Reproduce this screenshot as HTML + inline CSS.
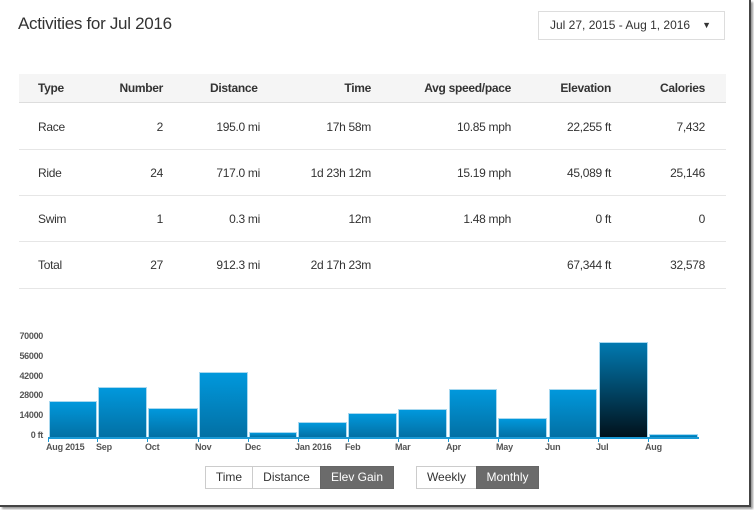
<!DOCTYPE html>
<html><head><meta charset="utf-8"><style>
*{margin:0;padding:0;box-sizing:border-box}
body{width:754px;height:510px;background:#fff;font-family:"Liberation Sans",sans-serif;position:relative;overflow:hidden;color:#333}
.a{position:absolute;white-space:nowrap}
.r{text-align:right}
.frame{position:absolute;left:0;top:0;width:751px;height:507px;border-right:2px solid #444;border-bottom:2px solid #444;box-shadow:2px 2px 2px #999}
.cell{font-size:12px;letter-spacing:-0.3px}
.hd{font-weight:bold;font-size:12px;letter-spacing:-0.3px;color:#333}
.line{position:absolute;left:19px;width:707px;height:1px;background:#e6e6e6}
.bar{position:absolute;background:linear-gradient(#0198dc,#0270a4);border:1px solid #a8d8ef;border-bottom:none}
.yl{position:absolute;left:0;width:43px;text-align:right;font-size:9px;font-weight:bold;color:#555;letter-spacing:-0.3px}
.xl{position:absolute;top:442px;font-size:9px;font-weight:bold;color:#555;letter-spacing:-0.2px}
.tk{position:absolute;top:437px;width:1px;height:5px;background:#1a9ad6}
.btn{position:absolute;top:466px;height:23px;border:1px solid #ccc;font-size:12px;line-height:21px;text-align:center;color:#333;background:#fff}
.on{background:#6b6b6b;color:#fff;border-color:#666}
</style></head><body>
<div class="frame"></div>
<div class="a" style="left:18px;top:14px;font-size:17px;color:#333;letter-spacing:-0.3px">Activities for Jul 2016</div>
<div class="a" style="left:538px;top:11px;width:187px;height:29px;border:1px solid #ddd;font-size:12px;line-height:27px;padding-left:11px;color:#333">Jul 27, 2015 - Aug 1, 2016<span style="position:absolute;right:13px;top:0;font-size:9px">&#9660;</span></div>

<div class="a" style="left:19px;top:74px;width:707px;height:29px;background:#f5f5f5;border-bottom:1px solid #ddd"></div>
<div class="a hd" style="left:38px;top:81px">Type</div>
<div class="a hd r" style="left:100px;width:63px;top:81px">Number</div>
<div class="a hd" style="left:210px;top:81px">Distance</div>
<div class="a hd r" style="left:300px;width:71px;top:81px">Time</div>
<div class="a hd r" style="left:400px;width:111px;top:81px">Avg speed/pace</div>
<div class="a hd r" style="left:540px;width:71px;top:81px">Elevation</div>
<div class="a hd r" style="left:630px;width:75px;top:81px">Calories</div>

<div class="line" style="top:149px"></div>
<div class="line" style="top:195px"></div>
<div class="line" style="top:241px"></div>
<div class="line" style="top:288px"></div>

<div class="a cell" style="left:38px;top:120px">Race</div>
<div class="a cell r" style="left:100px;width:63px;top:120px">2</div>
<div class="a cell r" style="left:180px;width:80px;top:120px">195.0 mi</div>
<div class="a cell r" style="left:290px;width:81px;top:120px">17h 58m</div>
<div class="a cell r" style="left:400px;width:111px;top:120px">10.85 mph</div>
<div class="a cell r" style="left:530px;width:81px;top:120px">22,255 ft</div>
<div class="a cell r" style="left:630px;width:75px;top:120px">7,432</div>

<div class="a cell" style="left:38px;top:166px">Ride</div>
<div class="a cell r" style="left:100px;width:63px;top:166px">24</div>
<div class="a cell r" style="left:180px;width:80px;top:166px">717.0 mi</div>
<div class="a cell r" style="left:290px;width:81px;top:166px">1d 23h 12m</div>
<div class="a cell r" style="left:400px;width:111px;top:166px">15.19 mph</div>
<div class="a cell r" style="left:530px;width:81px;top:166px">45,089 ft</div>
<div class="a cell r" style="left:630px;width:75px;top:166px">25,146</div>

<div class="a cell" style="left:38px;top:212px">Swim</div>
<div class="a cell r" style="left:100px;width:63px;top:212px">1</div>
<div class="a cell r" style="left:180px;width:80px;top:212px">0.3 mi</div>
<div class="a cell r" style="left:290px;width:81px;top:212px">12m</div>
<div class="a cell r" style="left:400px;width:111px;top:212px">1.48 mph</div>
<div class="a cell r" style="left:530px;width:81px;top:212px">0 ft</div>
<div class="a cell r" style="left:630px;width:75px;top:212px">0</div>

<div class="a cell" style="left:38px;top:258px">Total</div>
<div class="a cell r" style="left:100px;width:63px;top:258px">27</div>
<div class="a cell r" style="left:180px;width:80px;top:258px">912.3 mi</div>
<div class="a cell r" style="left:290px;width:81px;top:258px">2d 17h 23m</div>
<div class="a cell r" style="left:530px;width:81px;top:258px">67,344 ft</div>
<div class="a cell r" style="left:630px;width:75px;top:258px">32,578</div>

<div class="yl" style="top:331px">70000</div>
<div class="yl" style="top:351px">56000</div>
<div class="yl" style="top:371px">42000</div>
<div class="yl" style="top:390px">28000</div>
<div class="yl" style="top:410px">14000</div>
<div class="yl" style="top:430px">0 ft</div>

<div class="bar" style="left:49px;width:48px;top:401px;height:36px"></div>
<div class="bar" style="left:98px;width:49px;top:387px;height:50px"></div>
<div class="bar" style="left:148px;width:50px;top:408px;height:29px"></div>
<div class="bar" style="left:199px;width:49px;top:372px;height:65px"></div>
<div class="bar" style="left:249px;width:48px;top:432px;height:5px"></div>
<div class="bar" style="left:298px;width:49px;top:422px;height:15px"></div>
<div class="bar" style="left:348px;width:49px;top:413px;height:24px"></div>
<div class="bar" style="left:398px;width:49px;top:409px;height:28px"></div>
<div class="bar" style="left:449px;width:48px;top:389px;height:48px"></div>
<div class="bar" style="left:498px;width:49px;top:418px;height:19px"></div>
<div class="bar" style="left:549px;width:48px;top:389px;height:48px"></div>
<div class="bar" style="left:599px;width:49px;top:342px;height:95px;background:linear-gradient(#0179b0,#01121c)"></div>
<div class="bar" style="left:649px;width:49px;top:434px;height:3px"></div>
<div class="a" style="left:48px;top:437px;width:651px;height:2px;background:#1a9ad6"></div>
<div class="tk" style="left:48px"></div><div class="tk" style="left:97px"></div><div class="tk" style="left:147px"></div><div class="tk" style="left:198px"></div><div class="tk" style="left:248px"></div><div class="tk" style="left:298px"></div><div class="tk" style="left:348px"></div><div class="tk" style="left:398px"></div><div class="tk" style="left:448px"></div><div class="tk" style="left:498px"></div><div class="tk" style="left:548px"></div><div class="tk" style="left:598px"></div><div class="tk" style="left:648px"></div>

<div class="xl" style="left:46px">Aug 2015</div>
<div class="xl" style="left:96px">Sep</div>
<div class="xl" style="left:145px">Oct</div>
<div class="xl" style="left:195px">Nov</div>
<div class="xl" style="left:245px">Dec</div>
<div class="xl" style="left:295px">Jan 2016</div>
<div class="xl" style="left:345px">Feb</div>
<div class="xl" style="left:395px">Mar</div>
<div class="xl" style="left:446px">Apr</div>
<div class="xl" style="left:496px">May</div>
<div class="xl" style="left:545px">Jun</div>
<div class="xl" style="left:596px">Jul</div>
<div class="xl" style="left:645px">Aug</div>

<div class="btn" style="left:205px;width:48px">Time</div>
<div class="btn" style="left:252px;width:69px">Distance</div>
<div class="btn on" style="left:320px;width:74px">Elev Gain</div>
<div class="btn" style="left:416px;width:61px">Weekly</div>
<div class="btn on" style="left:476px;width:63px">Monthly</div>
</body></html>
